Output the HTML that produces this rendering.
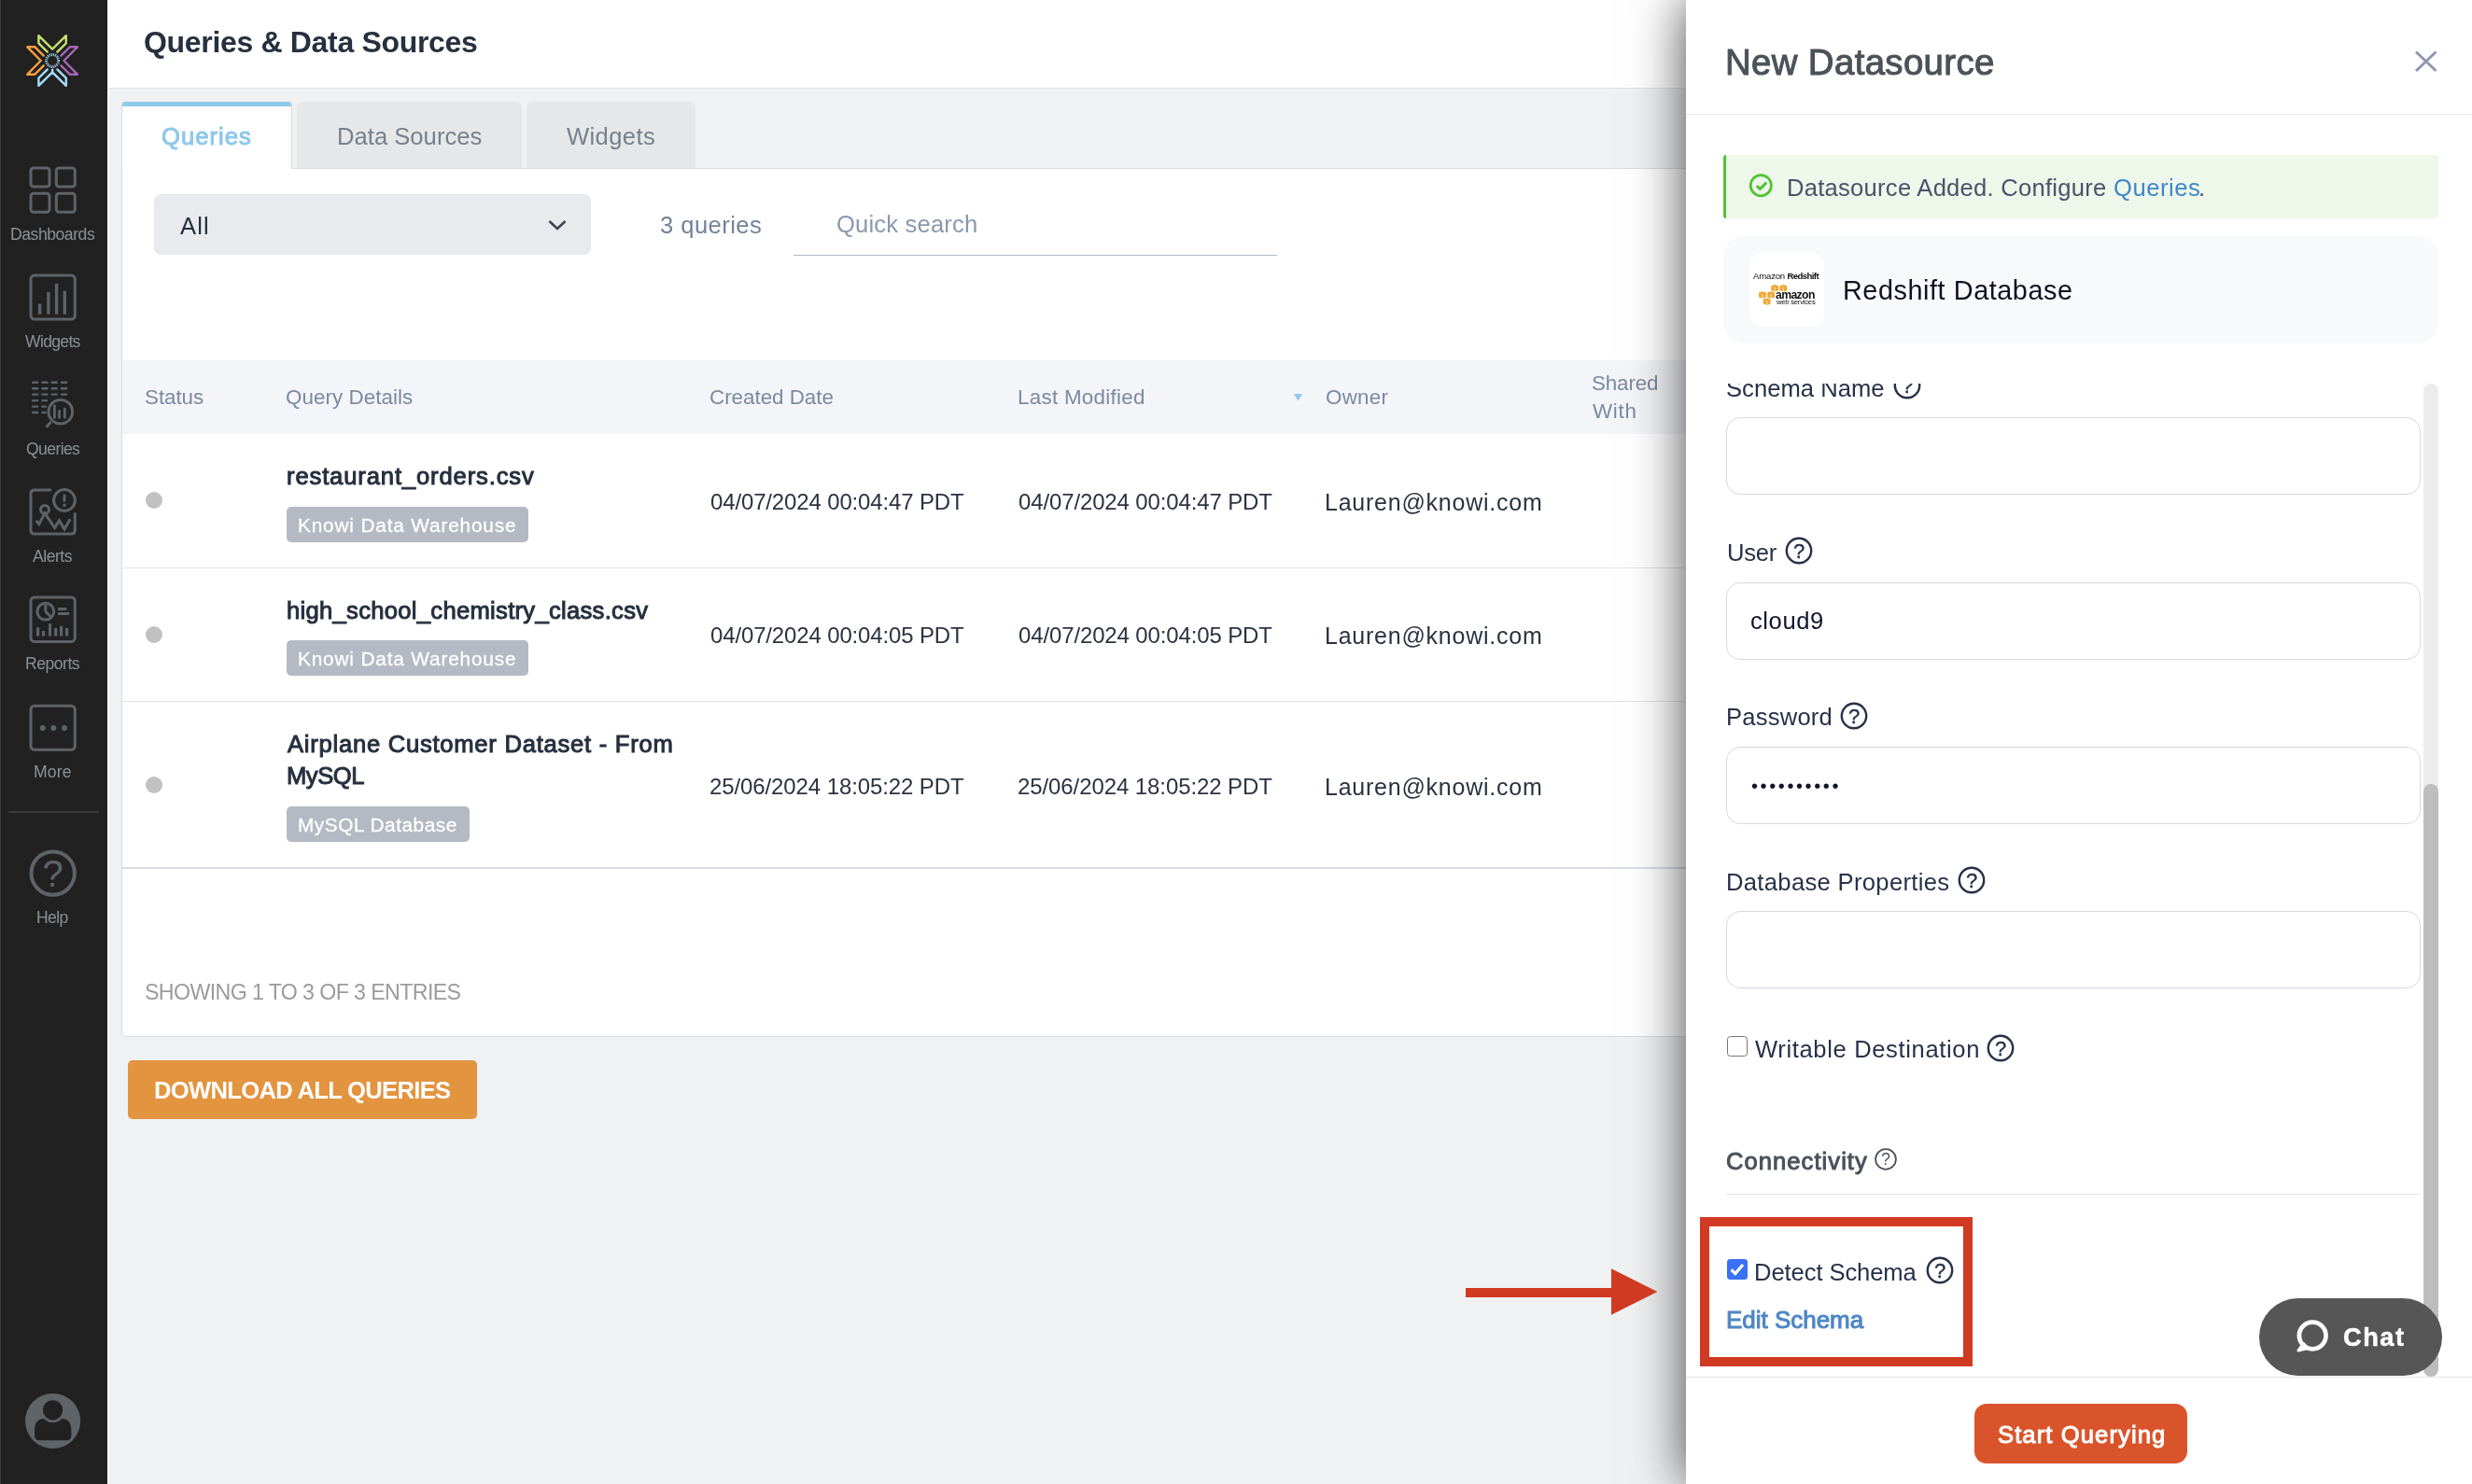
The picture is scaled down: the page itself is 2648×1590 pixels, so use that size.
<!DOCTYPE html>
<html lang="en">
<head>
<meta charset="utf-8">
<title>Queries &amp; Data Sources</title>
<style>
*{box-sizing:border-box;margin:0;padding:0}
html,body{width:2648px;height:1590px;overflow:hidden}
body{position:relative;background:#f0f1f3;font-family:"Liberation Sans",Arial,sans-serif;color:#26303e}
.a{position:absolute}
.t{position:absolute;white-space:nowrap;line-height:1;display:block;will-change:transform}
svg{position:absolute;overflow:visible}
#sidebar{position:absolute;left:0;top:0;width:116px;height:1590px;background:#212121;border-left:1px solid #3a3a3a;border-right:1px solid #fff;box-shadow:inset -1px 0 0 #191919;z-index:1}
#hdr{position:absolute;left:115px;top:0;width:2533px;height:95px;background:#fff;border-bottom:1px solid #dfe2e6}
.tab{position:absolute;top:109px;height:71px;background:#e6e7e9;border-radius:6px 6px 0 0}
#tabact{position:absolute;left:130px;top:109px;width:183px;height:72px;background:#fff;border-radius:4px 4px 0 0;border-left:1px solid #d9dbe1;border-right:1px solid #d5d9df;overflow:hidden;z-index:2}
#tabact i{position:absolute;left:-1px;top:0;width:183px;height:5px;background:#8ec8ea}
#card{position:absolute;left:130px;top:180px;width:1801px;height:931px;background:#fff;border:1px solid #d8dce1;border-radius:0 0 0 6px}
#sel{position:absolute;left:165px;top:208px;width:468px;height:65px;background:#e9eaee;border-radius:7px}
#qsline{position:absolute;left:850px;top:273px;width:518px;height:1px;background:#b0bac8}
#thead{position:absolute;left:131px;top:386px;width:1701px;height:79px;background:#f4f5f9}
.rl{position:absolute;left:131px;width:1701px;height:1.5px;background:#e1e4e9}
.dot{position:absolute;left:156px;width:18px;height:18px;border-radius:50%;background:#c1c1c1}
.badge{position:absolute;left:307px;height:38px;background:#b4b9c3;border-radius:5px}
#dl{position:absolute;left:137px;top:1136px;width:374px;height:63px;background:#e2943f;border-radius:5px}
#panel{position:absolute;left:1806px;top:0;width:842px;height:1590px;background:#fff;box-shadow:0 0 54px rgba(0,0,0,.72);z-index:5}
#pin{position:absolute;left:-1806px;top:0;width:2648px;height:1590px}
#phl{position:absolute;left:1806px;top:122px;width:842px;height:1px;background:#e6e6e6}
#alert{position:absolute;left:1846px;top:166px;width:766px;height:68px;background:#edf7ea;border-left:3px solid #52c234;border-radius:3px}
#dscard{position:absolute;left:1846px;top:253px;width:766px;height:115px;background:#f8f9fb;border-radius:22px}
#logo{position:absolute;left:1874px;top:271px;width:80px;height:79px;background:#fff;border-radius:14px}
#scroll{position:absolute;left:1806px;top:411px;width:790px;height:1064px;overflow:hidden}
#sin{position:absolute;left:-1806px;top:-411px;width:2648px;height:1590px}
.inp{position:absolute;left:1849px;width:744px;height:83px;border:1.5px solid #d4d8e1;border-radius:15px;background:#fff}
#track{position:absolute;left:2596px;top:411px;width:16px;height:1064px;background:#ececec;border-radius:8px}
#thumb{position:absolute;left:2596px;top:840px;width:16px;height:635px;background:#bdbdbd;border-radius:8px}
#pfl{position:absolute;left:1806px;top:1475px;width:842px;height:1px;background:#e6e6e6}
#startb{position:absolute;left:2115px;top:1504px;width:228px;height:64px;background:#d9542b;border-radius:13px}
#chat{position:absolute;left:2420px;top:1391px;width:196px;height:83px;background:#565656;border-radius:42px}
#redbox{position:absolute;left:1821px;top:1304px;width:292px;height:160px;border:10px solid #d13a22}
.cb{position:absolute;left:1850px;width:21.6px;height:21.6px;border-radius:3.5px}
#arrow{z-index:6}

</style>
</head>
<body>
<div id="sidebar"></div>
<svg class="a" style="left:0;top:0;z-index:1" width="115" height="1590" viewBox="0 0 115 1590" fill="none">
  <!-- knowi logo -->
  <g transform="translate(56.1 65)" stroke-width="2.4" stroke-linecap="round" stroke-linejoin="round">
    <path id="chev" d="M-5.3,-9.4 L-14.7,-18.7 L-14.7,-26.8 L0,-12.4 L14.7,-26.8 L14.7,-18.7 L5.3,-9.4" stroke="#c5e06c"/>
    <path d="M-5.3,-9.4 L-14.7,-18.7 L-14.7,-26.8 L0,-12.4 L14.7,-26.8 L14.7,-18.7 L5.3,-9.4" stroke="#a566b8" transform="rotate(90)"/>
    <path d="M-5.3,-9.4 L-14.7,-18.7 L-14.7,-26.8 L0,-12.4 L14.7,-26.8 L14.7,-18.7 L5.3,-9.4 M0,-12.4 L0,-9.6" stroke="#a4dcf8" transform="rotate(180)"/>
    <path d="M-5.3,-9.4 L-14.7,-18.7 L-14.7,-26.8 L0,-12.4 L14.7,-26.8 L14.7,-18.7 L5.3,-9.4" stroke="#f5a040" transform="rotate(270)"/>
    <circle r="6.5" stroke="#9ccfe8" stroke-width="3" stroke-dasharray="1.15 0.9" stroke-linecap="butt"/>
  </g>
  <g stroke="#5d6368" stroke-width="3">
    <!-- dashboards -->
    <rect x="33" y="180" width="20" height="20" rx="3"/>
    <rect x="60.3" y="180" width="20" height="20" rx="3"/>
    <rect x="33" y="207.3" width="20" height="20" rx="3"/>
    <rect x="60.3" y="207.3" width="20" height="20" rx="3"/>
    <!-- widgets -->
    <rect x="33" y="295.1" width="47.3" height="47" rx="4"/>
    <path d="M42.6,325.4V336.7 M51.9,313V336.7 M60.6,304V336.7 M69.3,311.8V336.7" stroke-width="3.4"/>
    <!-- queries -->
    <g stroke-width="2.4">
      <path d="M34.1,409.7h7 M44.5,409.7h7 M54.7,409.7h7 M65.1,409.7h7"/>
      <path d="M34.1,416.2h7 M44.5,416.2h7 M54.7,416.2h7 M65.1,416.2h7"/>
      <path d="M34.1,422.6h7 M44.5,422.6h7 M54.7,422.6h7 M65.1,422.6h7"/>
      <path d="M34.1,429.1h7 M44.5,429.1h6.6"/>
      <path d="M34.1,435.6h7 M44.5,435.6h5.4"/>
      <path d="M34.1,442h7 M44.5,442h5.1"/>
    </g>
    <circle cx="64.8" cy="441.2" r="12.8"/>
    <path d="M54.6,452 L49.6,457.8"/>
    <path d="M58.4,433.7V448.5 M63.5,439.2V448.5 M69.3,436.8V448.5" stroke-width="2.8"/>
    <!-- alerts -->
    <path d="M55,525.1 H37 Q33,525.1 33,529.1 V568 Q33,572 37,572 H76.3 Q80.3,572 80.3,568 V549.2"/>
    <circle cx="69" cy="536" r="11.4"/>
    <path d="M69,529.8V537.6"/>
    <circle cx="69" cy="541.2" r="1.7" fill="#5d6368" stroke="none"/>
    <circle cx="48" cy="546.1" r="4.5"/>
    <path d="M38.7,557.7 L41.8,561.6 L48,549.8 L58.6,565.5 L63.5,557.7 L69,567 L75.2,556.2"/>
    <!-- reports -->
    <rect x="33" y="640" width="47.3" height="47.4" rx="4"/>
    <circle cx="48.8" cy="655.2" r="8.9"/>
    <path d="M48.8,655.2V646.3 M48.8,655.2L55,661.4"/>
    <path d="M62,652.6H71.3 M62,657.5H74.1"/>
    <path d="M40.6,672.3V681.6 M46.5,676.1V681.6 M53.5,668.1V681.6 M59.7,673V681.6 M65.6,670.7V681.6 M71.6,673V681.6" stroke-width="3.2"/>
    <!-- more -->
    <rect x="33" y="756.2" width="47.3" height="47.1" rx="4"/>
    <g fill="#5d6368" stroke="none"><circle cx="45.7" cy="780" r="3"/><circle cx="57.3" cy="780" r="3"/><circle cx="69" cy="780" r="3"/></g>
    <!-- divider -->
    <path d="M9,870H106" stroke="#3a3a3a" stroke-width="2"/>
    <!-- help -->
    <circle cx="56.7" cy="935.6" r="23.2" stroke-width="4"/>
    <text x="56.7" y="949.6" font-family="Liberation Sans, sans-serif" font-size="40" font-weight="400" text-anchor="middle" fill="#5d6368" stroke="none">?</text>
  </g>
  <!-- avatar -->
  <circle cx="56.6" cy="1522.5" r="29.6" fill="#5f6468"/>
  <path d="M37,1538 V1532 Q37,1520.1 48,1520.1 H65.4 Q76.4,1520.1 76.4,1532 V1538 Q76.4,1543.3 71,1543.3 H42.4 Q37,1543.3 37,1538 Z" fill="#212121"/>
  <circle cx="56.6" cy="1510.8" r="13.2" fill="#5f6468"/>
  <circle cx="56.6" cy="1510.8" r="10.6" fill="#212121"/>
</svg>
<div class="a" style="left:0;top:0;width:115px;height:1590px;z-index:2">
<span class="t" style="left:11.40px;top:242.80px;font-size:17.6px;font-weight:400;color:#8c9196;letter-spacing:-0.463px">Dashboards</span><span class="t" style="left:26.70px;top:357.80px;font-size:17.6px;font-weight:400;color:#8c9196;letter-spacing:-0.693px">Widgets</span><span class="t" style="left:27.60px;top:472.70px;font-size:17.6px;font-weight:400;color:#8c9196;letter-spacing:-0.618px">Queries</span><span class="t" style="left:35.30px;top:587.80px;font-size:17.6px;font-weight:400;color:#8c9196;letter-spacing:-0.495px">Alerts</span><span class="t" style="left:26.90px;top:702.70px;font-size:17.6px;font-weight:400;color:#8c9196;letter-spacing:-0.501px">Reports</span><span class="t" style="left:36.20px;top:818.60px;font-size:17.6px;font-weight:400;color:#8c9196;letter-spacing:0.167px">More</span><span class="t" style="left:39.00px;top:974.50px;font-size:17.6px;font-weight:400;color:#8c9196;letter-spacing:-0.6px">Help</span>
</div>
<div id="hdr"></div>
<span class="t" style="left:154.00px;top:29.01px;font-size:32px;font-weight:700;color:#26303e;letter-spacing:-0.324px">Queries &amp; Data Sources</span>
<div id="card"></div>
<div id="tabact"><i></i></div>
<div class="tab" style="left:318px;width:241px"></div>
<div class="tab" style="left:564px;width:181px"></div>
<div class="a" style="left:0;top:0;z-index:3"><span class="t" style="left:173.00px;top:134.13px;font-size:25.6px;font-weight:400;color:#8ec8ea;letter-spacing:1.03px;-webkit-text-stroke:1px #8ec8ea">Queries</span><span class="t" style="left:360.50px;top:134.13px;font-size:25.6px;font-weight:400;color:#76808d;letter-spacing:0.021px">Data Sources</span><span class="t" style="left:607.00px;top:134.13px;font-size:25.6px;font-weight:400;color:#76808d;letter-spacing:0.391px">Widgets</span></div>
<div id="sel"></div>
<span class="t" style="left:193.00px;top:230.13px;font-size:25.6px;font-weight:400;color:#26303e;letter-spacing:1.122px">All</span>
<svg style="left:586px;top:234px" width="22" height="14" viewBox="0 0 22 14" fill="none"><path d="M2.5,3 L11,11 L19.5,3" stroke="#3b4452" stroke-width="2.6"/></svg>
<span class="t" style="left:707.00px;top:229.13px;font-size:25.6px;font-weight:400;color:#72839a;letter-spacing:0.439px">3 queries</span><span class="t" style="left:896.00px;top:228.13px;font-size:25.6px;font-weight:400;color:#8a99ad;letter-spacing:0.171px">Quick search</span>
<div id="qsline"></div>
<div id="thead"></div>
<span class="t" style="left:155.00px;top:414.84px;font-size:22.4px;font-weight:400;color:#7b8a9f;letter-spacing:-0.056px">Status</span><span class="t" style="left:306.00px;top:414.84px;font-size:22.4px;font-weight:400;color:#7b8a9f;letter-spacing:0.047px">Query Details</span><span class="t" style="left:760.00px;top:414.84px;font-size:22.4px;font-weight:400;color:#7b8a9f;letter-spacing:-0.02px">Created Date</span><span class="t" style="left:1089.75px;top:414.84px;font-size:22.4px;font-weight:400;color:#7b8a9f;letter-spacing:0.273px">Last Modified</span><span class="t" style="left:1419.50px;top:414.84px;font-size:22.4px;font-weight:400;color:#7b8a9f;letter-spacing:0.252px">Owner</span><span class="t" style="left:1704.50px;top:399.59px;font-size:22.4px;font-weight:400;color:#7b8a9f;letter-spacing:-0.15px">Shared</span><span class="t" style="left:1705.50px;top:430.34px;font-size:22.4px;font-weight:400;color:#7b8a9f;letter-spacing:0.724px">With</span>
<svg style="left:1386px;top:421.5px" width="9" height="8" viewBox="0 0 9 8"><path d="M0,0H9L4.5,7.5Z" fill="#8ec8ea"/></svg>
<div class="rl" style="top:607.5px"></div>
<div class="rl" style="top:750.5px"></div>
<div class="rl" style="top:928.5px;height:2px;background:#d9dde2"></div>
<div class="dot" style="top:527px"></div>
<div class="dot" style="top:671px"></div>
<div class="dot" style="top:832px"></div>
<div class="badge" style="top:543px;width:259px"></div>
<div class="badge" style="top:686px;width:259px"></div>
<div class="badge" style="top:864px;width:196px"></div>
<span class="t" style="left:306.60px;top:498.13px;font-size:25.6px;font-weight:400;color:#26303e;letter-spacing:0.864px;-webkit-text-stroke:1px #26303e">restaurant_orders.csv</span><span class="t" style="left:319.00px;top:552.94px;font-size:20.8px;font-weight:400;color:#ffffff;letter-spacing:0.835px;-webkit-text-stroke:.3px #fff">Knowi Data Warehouse</span><span class="t" style="left:761.00px;top:526.48px;font-size:24px;font-weight:400;color:#2b3340;letter-spacing:-0.146px">04/07/2024 00:04:47 PDT</span><span class="t" style="left:1090.75px;top:526.48px;font-size:24px;font-weight:400;color:#2b3340;letter-spacing:-0.135px">04/07/2024 00:04:47 PDT</span><span class="t" style="left:1418.50px;top:525.64px;font-size:25px;font-weight:400;color:#2b3340;letter-spacing:0.767px">Lauren@knowi.com</span>
<span class="t" style="left:306.90px;top:642.13px;font-size:25.6px;font-weight:400;color:#26303e;letter-spacing:0.29px;-webkit-text-stroke:1px #26303e">high_school_chemistry_class.csv</span><span class="t" style="left:319.00px;top:695.94px;font-size:20.8px;font-weight:400;color:#ffffff;letter-spacing:0.835px;-webkit-text-stroke:.3px #fff">Knowi Data Warehouse</span><span class="t" style="left:761.00px;top:669.48px;font-size:24px;font-weight:400;color:#2b3340;letter-spacing:-0.146px">04/07/2024 00:04:05 PDT</span><span class="t" style="left:1090.75px;top:669.48px;font-size:24px;font-weight:400;color:#2b3340;letter-spacing:-0.135px">04/07/2024 00:04:05 PDT</span><span class="t" style="left:1418.50px;top:668.64px;font-size:25px;font-weight:400;color:#2b3340;letter-spacing:0.767px">Lauren@knowi.com</span>
<span class="t" style="left:307.50px;top:785.13px;font-size:25.6px;font-weight:400;color:#26303e;letter-spacing:0.745px;-webkit-text-stroke:1px #26303e">Airplane Customer Dataset - From</span><span class="t" style="left:306.60px;top:819.13px;font-size:25.6px;font-weight:400;color:#26303e;letter-spacing:-0.474px;-webkit-text-stroke:1px #26303e">MySQL</span><span class="t" style="left:319.00px;top:873.94px;font-size:20.8px;font-weight:400;color:#ffffff;letter-spacing:0.533px;-webkit-text-stroke:.3px #fff">MySQL Database</span><span class="t" style="left:760.00px;top:831.48px;font-size:24px;font-weight:400;color:#2b3340;letter-spacing:-0.101px">25/06/2024 18:05:22 PDT</span><span class="t" style="left:1089.75px;top:831.48px;font-size:24px;font-weight:400;color:#2b3340;letter-spacing:-0.089px">25/06/2024 18:05:22 PDT</span><span class="t" style="left:1418.50px;top:830.64px;font-size:25px;font-weight:400;color:#2b3340;letter-spacing:0.767px">Lauren@knowi.com</span>
<span class="t" style="left:155.00px;top:1052.16px;font-size:23.2px;font-weight:400;color:#9b9b9b;letter-spacing:-0.604px">SHOWING 1 TO 3 OF 3 ENTRIES</span>
<div id="dl"></div>
<span class="t" style="left:165.00px;top:1156.13px;font-size:25.6px;font-weight:700;color:#ffffff;letter-spacing:-0.691px">DOWNLOAD ALL QUERIES</span>
<div id="panel"><div id="pin">
<div id="phl"></div>
<span class="t" style="left:1848.00px;top:48.29px;font-size:38.4px;font-weight:400;color:#4b5259;letter-spacing:0.351px;-webkit-text-stroke:1px #4b5259">New Datasource</span>
<svg style="left:2584px;top:51px" width="30" height="30" viewBox="0 0 30 30" fill="none"><path d="M4,4.5 L25.5,25 M25.5,4.5 L4,25" stroke="#8d97ad" stroke-width="3"/></svg>
<div id="alert"></div>
<svg style="left:1872px;top:184px" width="30" height="30" viewBox="0 0 30 30" fill="none" stroke="#52c234"><circle cx="14.3" cy="14.7" r="11.1" stroke-width="2.7"/><path d="M9.8,15.2 L13.4,18.4 L20.2,11.6" stroke-width="3"/></svg>
<span class="t" style="left:1913.60px;top:188.93px;font-size:25.6px;font-weight:400;color:#4e5169;letter-spacing:0.248px">Datasource Added. Configure</span><span class="t" style="left:2264.00px;top:188.93px;font-size:25.6px;font-weight:400;color:#3f86c8;letter-spacing:0.53px">Queries</span><span class="t" style="left:2355.00px;top:188.93px;font-size:25.6px;font-weight:400;color:#4e5169;letter-spacing:0px">.</span>
<div id="dscard"></div>
<div id="logo">
  <span class="t" style="left:3.6px;top:19.6px;font-size:9.6px;color:#111;letter-spacing:-0.2px">Amazon <b style="letter-spacing:-0.6px">Redshift</b></span>
  <svg style="left:10px;top:33.7px" width="32" height="24" viewBox="0 0 32 24">
    <g fill="#f0a830">
      <path d="M17.2,0 l3.9,1.2 v5 l-3.9,1.3 l-3.9,-1.3 v-5z"/>
      <path d="M26.3,0 l3.9,1.2 v5 l-3.9,1.3 l-3.9,-1.3 v-5z"/>
      <path d="M4,7.2 l3.9,1.2 v5 l-3.9,1.3 l-3.9,-1.3 v-5z"/>
      <path d="M13.1,7.2 l3.9,1.2 v5 l-3.9,1.3 l-3.9,-1.3 v-5z"/>
      <path d="M8.6,14.4 l3.9,1.2 v5 l-3.9,1.3 l-3.9,-1.3 v-5z"/>
    </g>
    <g stroke="#fff" stroke-width="0.7"><path d="M17.2,2.6v5 M26.3,2.6v5 M4,9.8v5 M13.1,9.8v5 M8.6,17v5"/></g>
  </svg>
  <span class="t" style="left:28.3px;top:38.6px;font-size:12.2px;font-weight:700;color:#111;letter-spacing:-0.6px">amazon</span>
  <span class="t" style="left:28.6px;top:49.2px;font-size:7.6px;color:#111;letter-spacing:-0.2px">web services</span>
</div>
<span class="t" style="left:1974.00px;top:297.42px;font-size:28.8px;font-weight:400;color:#0f1222;letter-spacing:0.569px">Redshift Database</span>
<div id="track"></div><div id="thumb"></div>
<div id="scroll"><div id="sin">
  <span class="t" style="left:1848.70px;top:403.53px;font-size:25.6px;font-weight:400;color:#273248;letter-spacing:0.026px">Schema Name</span>
  <svg style="left:2027.7px;top:398px" width="30" height="30" viewBox="0 0 30 30" fill="none"><circle cx="15" cy="15" r="13.2" stroke="#273248" stroke-width="2.4"/><text x="15" y="22.6" font-family="Liberation Sans, sans-serif" font-size="22" text-anchor="middle" fill="#273248" stroke="#273248" stroke-width="0.4">?</text></svg>
  <div class="inp" style="top:447px"></div>
  <span class="t" style="left:1849.90px;top:579.93px;font-size:25.6px;font-weight:400;color:#273248;letter-spacing:-0.238px">User</span>
  <svg style="left:1912.4px;top:575.2px" width="30" height="30" viewBox="0 0 30 30" fill="none"><circle cx="15" cy="15" r="13.2" stroke="#273248" stroke-width="2.4"/><text x="15" y="22.6" font-family="Liberation Sans, sans-serif" font-size="22" text-anchor="middle" fill="#273248" stroke="#273248" stroke-width="0.4">?</text></svg>
  <div class="inp" style="top:624px"></div>
  <span class="t" style="left:1875.00px;top:653.13px;font-size:25.6px;font-weight:400;color:#10152a;letter-spacing:0.563px">cloud9</span>
  <span class="t" style="left:1849.20px;top:756.13px;font-size:25.6px;font-weight:400;color:#273248;letter-spacing:0.209px">Password</span>
  <svg style="left:1970.5px;top:751.5px" width="30" height="30" viewBox="0 0 30 30" fill="none"><circle cx="15" cy="15" r="13.2" stroke="#273248" stroke-width="2.4"/><text x="15" y="22.6" font-family="Liberation Sans, sans-serif" font-size="22" text-anchor="middle" fill="#273248" stroke="#273248" stroke-width="0.4">?</text></svg>
  <div class="inp" style="top:800px"></div>
  <span class="t" style="left:1876.2px;top:831.8px;font-size:20px;letter-spacing:2.6px;color:#10152a">••••••••••</span>
  <span class="t" style="left:1849.20px;top:932.83px;font-size:25.6px;font-weight:400;color:#273248;letter-spacing:0.321px">Database Properties</span>
  <svg style="left:2096.8px;top:928px" width="30" height="30" viewBox="0 0 30 30" fill="none"><circle cx="15" cy="15" r="13.2" stroke="#273248" stroke-width="2.4"/><text x="15" y="22.6" font-family="Liberation Sans, sans-serif" font-size="22" text-anchor="middle" fill="#273248" stroke="#273248" stroke-width="0.4">?</text></svg>
  <div class="inp" style="top:976px"></div>
  <div class="cb" style="top:1110px;border:1.6px solid #767676;background:#fff"></div>
  <span class="t" style="left:1879.50px;top:1112.13px;font-size:25.6px;font-weight:400;color:#273248;letter-spacing:0.625px">Writable Destination</span>
  <svg style="left:2128px;top:1107.7px" width="30" height="30" viewBox="0 0 30 30" fill="none"><circle cx="15" cy="15" r="13.2" stroke="#273248" stroke-width="2.4"/><text x="15" y="22.6" font-family="Liberation Sans, sans-serif" font-size="22" text-anchor="middle" fill="#273248" stroke="#273248" stroke-width="0.4">?</text></svg>
  <span class="t" style="left:1849.00px;top:1232.13px;font-size:25.6px;font-weight:400;color:#4b525c;letter-spacing:1.036px;-webkit-text-stroke:1px #4b525c">Connectivity</span>
  <svg style="left:2007.8px;top:1230px" width="24" height="24" viewBox="0 0 24 24" fill="none"><circle cx="12" cy="12" r="10.9" stroke="#4b525c" stroke-width="1.8"/><text x="12" y="18.2" font-family="Liberation Sans, sans-serif" font-size="18" text-anchor="middle" fill="#4b525c">?</text></svg>
  <div class="a" style="left:1849px;top:1278.5px;width:744px;height:1.5px;background:#e3e5ee"></div>
  <div class="cb" style="top:1349px;background:#3871f5"><svg style="left:0;top:0" width="21.6" height="21.6" viewBox="0 0 21.6 21.6" fill="none"><path d="M4.6,11.4 L8.8,15.6 L17,6" stroke="#fff" stroke-width="3.2"/></svg></div>
  <span class="t" style="left:1878.60px;top:1350.93px;font-size:25.6px;font-weight:400;color:#273248;letter-spacing:-0.095px">Detect Schema</span>
  <svg style="left:2063.3px;top:1346.1px" width="30" height="30" viewBox="0 0 30 30" fill="none"><circle cx="15" cy="15" r="13.2" stroke="#273248" stroke-width="2.4"/><text x="15" y="22.6" font-family="Liberation Sans, sans-serif" font-size="22" text-anchor="middle" fill="#273248" stroke="#273248" stroke-width="0.4">?</text></svg>
  <span class="t" style="left:1848.70px;top:1401.29px;font-size:26px;font-weight:400;color:#4e87c4;letter-spacing:-0.025px;-webkit-text-stroke:1px #4e87c4">Edit Schema</span>
</div></div>
<div id="redbox"></div>
<div id="pfl"></div>
<div id="startb"></div>
<span class="t" style="left:2139.60px;top:1524.93px;font-size:25.6px;font-weight:400;color:#ffffff;letter-spacing:1.094px;-webkit-text-stroke:1px #ffffff">Start Querying</span>
<div id="chat"></div>
<svg style="left:2455px;top:1409px" width="44" height="44" viewBox="0 0 44 44" fill="none"><circle cx="22.2" cy="22" r="14.3" stroke="#fff" stroke-width="4.8"/><path d="M12.5,30.5 L7,38 L17,35.5Z" fill="#fff" stroke="#fff" stroke-width="3" stroke-linejoin="round"/></svg>
<span class="t" style="left:2510.00px;top:1419.48px;font-size:27.2px;font-weight:700;color:#ffffff;letter-spacing:1.546px;-webkit-text-stroke:.5px #fff">Chat</span>
</div></div>
<svg id="arrow" style="left:1570px;top:1359px" width="206" height="50" viewBox="0 0 206 50"><path d="M0,21H156V0.3L205.5,25L156,49.7V31H0Z" fill="#d13a22"/></svg>

</body>
</html>
